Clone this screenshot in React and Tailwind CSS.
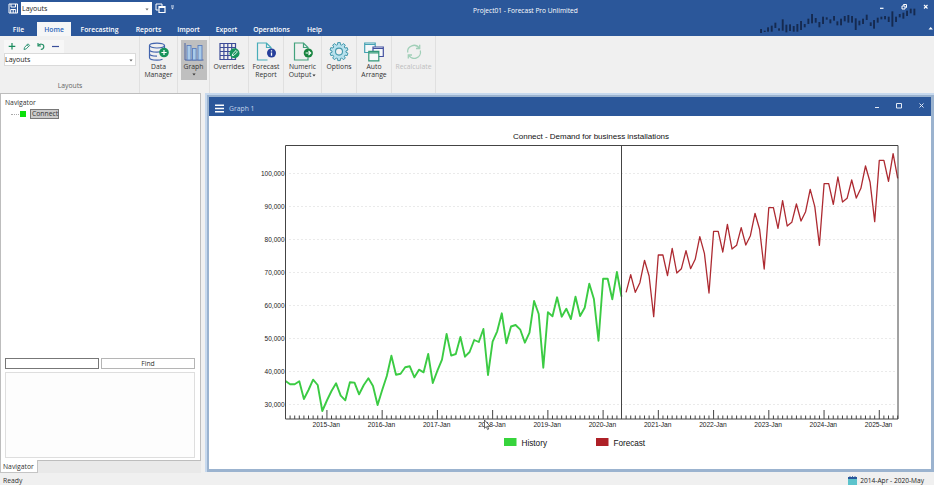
import React from 'react';

// Plot rows per month, starting at 2014-Apr
const HISTORY = [
  381, 384.3, 384.3, 381.3, 399, 390, 379.7, 385, 411, 400.5, 391, 383.3, 395.7, 400.3, 382.3, 382.6, 394.3, 385, 378.3, 386,
  405, 390, 376, 355.7, 374.7, 373.7, 367.3, 366.3, 377.3, 369.7, 372.3, 354, 383, 370.7, 359.7, 333.9, 355.6, 354, 337, 356.7,
  352, 340, 342, 329, 375, 341.7, 331.3, 313.3, 343.3, 326.5, 325, 329.7, 342.7, 332.7, 301, 314, 367.7, 312.3, 316.3, 297.3,
  316.7, 308.7, 319, 296.7, 316, 307.7, 283.7, 299, 340.7, 278.7, 278.7, 299.3, 272, 296.7,
];

const FORECAST = [
  292.3, 274.7, 292.3, 282.7, 260.3, 276, 316.7, 255, 255, 275.7, 248.3, 273, 268.7, 250.7, 268.7, 259.3, 236.7, 253.3, 293,
  231.3, 231.3, 252, 224.3, 249, 245.3, 227.7, 245, 235.7, 213.3, 229.3, 269, 207.7, 207.7, 228.3, 200.7, 226, 222.3, 204, 221,
  211.7, 189.3, 206.7, 245.3, 183.7, 183.7, 204.3, 177, 202, 198.3, 180, 198, 188.3, 166, 182.3, 221.7, 160.3, 160.3, 181.3,
  153.7, 178.3,
];

const LEFT = 285.5;
const STEP = 4.603;
const monthX = (i) => LEFT + i * STEP;
const toPoints = (rows, start) => rows.map((y, i) => `${monthX(start + i).toFixed(1)},${y}`).join(' ');

const LEVELS = [
  ['100,000', 173.5], ['90,000', 206.5], ['80,000', 239.5], ['70,000', 272.5],
  ['60,000', 305.5], ['50,000', 338.5], ['40,000', 371.5], ['30,000', 404.5],
];

// x, top, bottom of every bar in the title bar decoration
const CANDLES = [
  [123, 87, 99], [134, 92, 96], [144, 82, 95], [155, 77, 95], [166, 68, 84], [177, 85, 92], [188, 58, 92], [199, 74, 97],
  [210, 73, 93], [221, 78, 95], [232, 72, 95], [243, 63, 90], [254, 72, 82], [265, 56, 72], [276, 42, 70], [287, 54, 68],
  [298, 66, 82], [309, 50, 72], [320, 52, 59], [331, 58, 70], [342, 48, 62], [352, 64, 76], [363, 56, 76], [374, 48, 64],
  [385, 45, 68], [396, 48, 68], [407, 55, 90], [418, 62, 76], [429, 56, 72], [440, 44, 60], [452, 67, 78], [462, 60, 86],
  [473, 53, 68], [484, 50, 58], [495, 48, 58], [506, 50, 66], [517, 34, 80], [528, 50, 66], [539, 42, 52], [550, 38, 56],
  [561, 32, 48], [572, 26, 40], [583, 26, 46],
];

const Caret = ({ className = '' }) => (
  <svg className={className} width="4" height="3" viewBox="0 0 4 3">
    <path d="M0.4 0.5h3.2L2 2.4z" fill="currentColor" />
  </svg>
);

const DataIcon = () => (
  <svg width="21" height="20" viewBox="0 0 21 20" fill="none">
    <g stroke="#4264ae" strokeWidth="1.2">
      <ellipse cx="9" cy="3.6" rx="7.5" ry="2.4" />
      <path d="M1.500 3.600v12c0 1.500 3 2.600 7.500 2.600 2 0 4-.3 5.500-1M16.500 3.600v3M1.500 7.600c0 1.600 3.400 2.600 7.500 2.600M1.500 11.600c0 1.600 3.400 2.600 7.500 2.600M9 10.200c2.500 0 5-.5 6.500-1.400" />
    </g>
    <circle cx="16" cy="10.500" r="4.800" fill="#17935c" />
    <path d="M16 7.900v5.200M13.400 10.500h5.200" stroke="#fff" strokeWidth="1.200" />
  </svg>
);

const GraphIcon = () => (
  <svg width="20" height="20" viewBox="0 0 20 20">
    <path d="M1 1v17h18.500" fill="none" stroke="#4b62a0" strokeWidth="1" />
    <g fill="#a9cbe8" stroke="#5b7dbd" strokeWidth="0.900">
      <rect x="3" y="3.500" width="4" height="14.500" />
      <rect x="8.500" y="6.500" width="3.600" height="11.500" />
      <rect x="14" y="3.500" width="4" height="14.500" />
    </g>
  </svg>
);

const OverridesIcon = () => (
  <svg width="21" height="20" viewBox="0 0 21 20" fill="none">
    <path d="M1 1.500h15.500v16H1zM1 5.500h15.500M1 9.500h15.500M1 13.500h15.500M4.900 1.500v16M8.800 1.500v16M12.700 1.500v16" stroke="#3d4c98" strokeWidth="1.200" />
    <circle cx="15.500" cy="11.200" r="5" fill="#17935c" />
    <path d="M13.300 13.700l.4-1.900 3.300-3.300 1.400 1.400-3.300 3.300z" stroke="#fff" strokeWidth="0.900" />
  </svg>
);

const ReportIcon = () => (
  <svg width="20" height="20" viewBox="0 0 20 20" fill="none">
    <path d="M11.500 18H1.500V1h9l4.500 4.500v2M10.500 1v4.500H15" stroke="#48adb9" strokeWidth="1.200" />
    <circle cx="15.500" cy="11" r="4.500" fill="#263f9b" />
    <path d="M15.500 10.400v3.300M15.500 8.200v1.200" stroke="#fff" strokeWidth="1.300" />
  </svg>
);

const NumericIcon = () => (
  <svg width="20" height="20" viewBox="0 0 20 20" fill="none">
    <path d="M15 15.500V18H1.500V1h9L15 5.500V7M10.500 1v4.500H15" stroke="#42a27c" strokeWidth="1.200" />
    <circle cx="15.300" cy="11" r="4.600" fill="#17843f" />
    <path d="M12.600 11h4.800M15.500 8.900l2.200 2.100-2.200 2.100" stroke="#fff" strokeWidth="1.200" />
  </svg>
);

const OptionsIcon = () => {
  const outline = [];
  for (let i = 0; i < 10; i++) {
    [[-0.22, 7], [-0.14, 9.1], [0.14, 9.1], [0.22, 7]].forEach(([turn, r]) => {
      const a = (i * Math.PI) / 5 + turn;
      outline.push(`${(10 + r * Math.sin(a)).toFixed(2)},${(9.6 - r * Math.cos(a)).toFixed(2)}`);
    });
  }
  return (
    <svg width="20" height="20" viewBox="0 0 20 20">
      <polygon points={outline.join(' ')} fill="#b7e1ed" stroke="#4599ad" strokeWidth="1" strokeLinejoin="round" />
      <circle cx="10" cy="9.600" r="3.500" fill="#f0f0f0" stroke="#4599ad" strokeWidth="1.100" />
    </svg>
  );
};

const ArrangeIcon = () => (
  <svg width="20" height="20" viewBox="0 0 20 20" fill="#f5f8fa" strokeWidth="1.200">
    <path d="M0.700 1h10.500v9.500H0.700zM0.700 2.500h10.500" stroke="#45a2b3" />
    <path d="M9 5h10.300v9.500H9zM9 6.500h10.300" stroke="#4350a0" />
    <path d="M4.800 9.300h10V18.800h-10zM4.800 10.800h10" stroke="#32997a" />
  </svg>
);

const RecalcIcon = () => (
  <svg width="20" height="20" viewBox="0 0 20 20" fill="none" stroke="#a1cfb8" strokeWidth="1.300">
    <path d="M3.700 10.500A6.300 6.300 0 0 1 15.200 6.200M16.300 8.500A6.300 6.300 0 0 1 4.800 13.300" />
    <path d="M15.700 2.800V6.500H12M4.300 16.500v-3.500H8" />
  </svg>
);

const TOOLS = [
  { lines: ['Data', 'Manager'], Icon: DataIcon, width: 'w-[38px]' },
  { lines: ['Graph'], Icon: GraphIcon, width: 'w-[32px]', active: true, caret: true },
  { lines: ['Overrides'], Icon: OverridesIcon, width: 'w-[39px]' },
  { lines: ['Forecast', 'Report'], Icon: ReportIcon, width: 'w-[35px]' },
  { lines: ['Numeric', 'Output'], Icon: NumericIcon, width: 'w-[38px]', caret: true },
  { lines: ['Options'], Icon: OptionsIcon, width: 'w-[35px]' },
  { lines: ['Auto', 'Arrange'], Icon: ArrangeIcon, width: 'w-[35px]' },
  { lines: ['Recalculate'], Icon: RecalcIcon, width: 'w-[44px]', disabled: true },
];

const Tool = ({ lines, Icon, width, active, caret, disabled }) => (
  <div className={`${width} flex shrink-0 justify-center border-r border-[#e0e0e0] pt-[4px]`}>
    <div
      className={`flex h-[40px] flex-col items-center pt-[2px] ${active ? 'w-[26px] bg-[#bfbfbf]' : 'w-full'} ${
        disabled ? 'text-[#bdbdbd]' : 'text-[#333]'
      }`}
    >
      <Icon />
      <div className="mt-px flex flex-col items-center text-[6.8px] leading-[8px] whitespace-nowrap">
        {lines.map((line, i) => (
          <span key={line} className="flex items-center gap-px">
            {line}
            {caret && i === 1 && <Caret />}
          </span>
        ))}
      </div>
      {caret && lines.length === 1 && <Caret className="mt-[2px]" />}
    </div>
  </div>
);

const TABS = [
  ['File', 'w-[37px]'], ['Home', 'w-[34px]'], ['Forecasting', 'w-[57px]'], ['Reports', 'w-[41px]'], ['Import', 'w-[39px]'],
  ['Export', 'w-[37px]'], ['Operations', 'w-[53px]'], ['Help', 'w-[33px]'],
];

const TitleBar = () => (
  <header className="relative flex h-[36px] shrink-0 flex-col bg-[#2b579a] text-white">
    <div className="flex h-[22px] items-start pt-[2px] pl-[8px]">
      <svg className="mt-[1px]" width="11" height="11" viewBox="0 0 11 11" fill="none" stroke="#fff">
        <path d="M1 1h8.500v9H1zM3 1v3h4.500V1M2.700 10V6.500h5V10M5.200 7v3" />
      </svg>
      <div className="ml-[2px] flex h-[13px] w-[131px] items-center justify-between bg-white pt-px pr-[3px] pl-px text-[7px] text-[#222]">
        Layouts
        <Caret className="text-[#666]" />
      </div>
      <svg className="ml-[3px]" width="11" height="12" viewBox="0 0 11 12" fill="none" stroke="#fff">
        <path d="M3.500 8H1V2h6v2" />
        <path d="M4 4.500h6v6H4zM4 5.500h6" strokeWidth="1.200" />
      </svg>
      <svg className="mt-[3px] ml-[4px]" width="5" height="6" viewBox="0 0 5 6" fill="#dce5f3">
        <path d="M1 0.500h3v1H1zM1 2.500h3L2.500 4.500z" />
      </svg>
      <div className="ml-[298px] pt-[4px] text-[6.6px] leading-[10px] whitespace-nowrap">Project01 - Forecast Pro Unlimited</div>
    </div>
    <nav className="flex h-[14px] text-[6.8px] leading-[15px] font-semibold">
      {TABS.map(([name, width]) => (
        <div key={name} className={`${width} text-center ${name === 'Home' ? 'bg-[#f5f6f7] text-[#2b65b9]' : ''}`}>
          {name}
        </div>
      ))}
    </nav>
    <svg className="absolute top-0 right-0" width="214" height="36" viewBox="0 0 214 36">
      {CANDLES.map(([x, top, bottom]) => (
        <rect key={x} x={x / 3 - 0.9} y={top / 3} width="1.900" height={(bottom - top) / 3} fill="#152a50" />
      ))}
      <g fill="none" stroke="#fff">
        <path d="M160 8.300h3.500" strokeWidth="1.200" />
        <path d="M182 6h3v3h-3zM183.500 5.500v-1h3v3h-1" />
        <path d="M204 5l3.500 3.500M207.500 5L204 8.500" strokeWidth="1.100" />
      </g>
      <path d="M208.500 29.500l2.200-2.500 2.200 2.500z" fill="#fff" />
    </svg>
  </header>
);

const Ribbon = () => (
  <section className="flex h-[57px] shrink-0 bg-[#f0f0f0]">
    <div className="flex w-[140px] shrink-0 flex-col border-r border-[#e0e0e0] pl-[4px]">
      <div className="mt-[4px] flex h-[13px] w-[60px] items-center bg-[#f7f7f7]">
        <svg width="60" height="13" viewBox="0 0 60 13" fill="none" strokeWidth="1.200">
          <path d="M8 3v6.500M4.700 6.300h6.600" stroke="#188a5c" />
          <path d="M20 9.500l.6-2.200L24 3.800l1.600 1.600-3.400 3.500zM23 4.800l1.600 1.600" stroke="#37997a" strokeWidth="1" />
          <path d="M34 3v3h3M34.300 5.700c1.300-2.200 5.500-2 5.500.8 0 1.600-1.300 2.800-3 3" stroke="#299169" />
          <path d="M48 6.500h7" stroke="#3b4f9b" />
        </svg>
      </div>
      <div className="flex h-[13px] w-[132px] items-center justify-between border border-[#dadada] bg-white pt-px pr-[2px] text-[7px] text-[#222]">
        Layouts
        <Caret className="text-[#666]" />
      </div>
      <div className="mt-[15px] w-[132px] text-center text-[6.8px] leading-[10px] text-[#666]">Layouts</div>
    </div>
    {TOOLS.map((tool) => (
      <Tool key={tool.lines[0]} {...tool} />
    ))}
  </section>
);

const Navigator = () => (
  <aside className="flex w-[201px] shrink-0 flex-col bg-[#e9e9e9] text-[6.8px] text-[#333]">
    <div className="flex h-[368px] flex-col border border-[#bdbdbd] bg-white px-[4px]">
      <div className="mt-[4px] leading-[9px]">Navigator</div>
      <div className="mt-[2px] flex h-[10px] items-center pl-[6px]">
        <span className="w-[8px] border-t border-dotted border-[#aaa]" />
        <span className="ml-px h-[6px] w-[6px] bg-[#0be00b]" />
        <span className="ml-[4px] flex h-[10px] w-[29px] items-center border border-[#777] bg-[#cbcbcb] px-px leading-[8px]">Connect</span>
      </div>
      <div className="mt-[239px] flex h-[11px] gap-[2px]">
        <div className="w-[94px] border border-[#777]" />
        <div className="w-[94px] border border-[#b5b5b5] text-center leading-[9px]">Find</div>
      </div>
      <div className="mt-[3px] h-[86px] w-[190px] border border-[#dedede] bg-[#fdfdfd]" />
    </div>
    <div className="-mt-px h-[13px] w-[38px] border-r border-b border-l border-[#c4c4c4] bg-white pt-px pl-[2px] leading-[12px]">Navigator</div>
  </aside>
);

const Chart = () => (
  <svg className="block" width="722" height="353" viewBox="209 116 722 353" fontFamily="Liberation Sans, Arial, sans-serif">
    <text x="513" y="138.500" fontSize="8" textLength="156" fill="#111">Connect - Demand for business installations</text>
    {LEVELS.map(([label, y]) => (
      <g key={label}>
        <line x1="289" x2="897" y1={y} y2={y} stroke="#eaeaea" strokeWidth="1" strokeDasharray="2 2" />
        <text x="284.500" y={y + 2.5} fontSize="6.500" textAnchor="end" fill="#222">{label}</text>
      </g>
    ))}
    <g stroke="#444" strokeWidth="1">
      {Array.from({ length: 134 }, (_, i) => (
        <line key={i} x1={monthX(i)} x2={monthX(i)} y1={i % 12 === 9 ? 410 : 415.500} y2="419" />
      ))}
    </g>
    {Array.from({ length: 11 }, (_, i) => (
      <text key={i} x={monthX(9 + i * 12) - 0.7} y="427.200" fontSize="6.700" textLength="27.500" textAnchor="middle" fill="#222">
        {`${2015 + i}-Jan`}
      </text>
    ))}
    <polyline points={toPoints(HISTORY, 0)} fill="none" stroke="#3bcb43" strokeWidth="1.900" strokeLinejoin="round" />
    <polyline points={toPoints(FORECAST, 74)} fill="none" stroke="#ad2a31" strokeWidth="1.300" strokeLinejoin="round" />
    <path d="M285.500 145.500h612.500v273.500h-612.500zM621.500 146v273" fill="none" stroke="#444" strokeWidth="1" />
    <rect x="504" y="438" width="12.500" height="8" fill="#37d43c" />
    <text x="521.500" y="445.800" fontSize="8.200" textLength="25.500" fill="#111">History</text>
    <rect x="596" y="438" width="12.500" height="8" fill="#ae2027" />
    <text x="613.500" y="445.800" fontSize="8.200" textLength="31.500" fill="#111">Forecast</text>
    <path d="M484.500 420v8.300l1.800-1.700 1.300 3 1.200-.6-1.300-2.800h2.500z" fill="#fff" stroke="#333" strokeWidth="0.700" />
  </svg>
);

const GraphWindow = () => (
  <main className="flex flex-col border-t-2 border-l-2 border-[#c7d9ee] bg-[#9bb3cf] pt-[2px] pr-[3px] pb-[3px] pl-[2px]">
    <div className="flex h-[19px] items-center justify-between bg-[#2b579a] pl-[6px] text-white">
      <div className="flex items-center gap-[5px] pt-[3px]">
        <svg width="9" height="9" viewBox="0 0 9 9" stroke="#fff" strokeWidth="1.500">
          <path d="M0 1.200h9M0 4.500h9M0 7.800h9" />
        </svg>
        <span className="pt-px text-[6.8px] leading-[10px] text-[#c4d4eb]">Graph 1</span>
      </div>
      <svg className="mb-px" width="58" height="10" viewBox="0 0 58 10" fill="none" stroke="#e3eaf5">
        <path d="M2 6.500h4" />
        <path d="M23.500 2.500h5v4.500h-5z" />
        <path d="M46.500 2.500l4 4M50.500 2.500l-4 4" />
      </svg>
    </div>
    <div className="bg-white">
      <Chart />
    </div>
  </main>
);

const StatusBar = () => (
  <footer className="flex h-[12px] shrink-0 items-center justify-between bg-[#f0f0f0] pt-[3px] pr-[10px] pl-[3px] text-[6.8px] leading-[9px] text-[#333]">
    <span>Ready</span>
    <div className="flex items-center gap-[3px] text-[#222]">
      <svg width="9" height="9" viewBox="0 0 9 9">
        <rect y="1.500" width="9" height="7.500" fill="#5cc3cc" />
        <path d="M0 1h9v2H0z" fill="#28569b" />
        <path d="M2 0v2M4.500 0v2M7 0v2" stroke="#28569b" strokeWidth="0.800" />
      </svg>
      <span className="text-[6.6px]">2014-Apr - 2020-May</span>
    </div>
  </footer>
);

const App = () => {
  return (
    <div className="flex h-[485px] w-[934px] flex-col overflow-hidden bg-[#f0f0f0] font-['Open_Sans','Noto_Sans',sans-serif]">
      <TitleBar />
      <Ribbon />
      <div className="flex h-[380px] shrink-0 gap-[4px]">
        <Navigator />
        <div className="min-w-0 flex-1">
          <GraphWindow />
        </div>
      </div>
      <StatusBar />
    </div>
  );
};

export default App;
